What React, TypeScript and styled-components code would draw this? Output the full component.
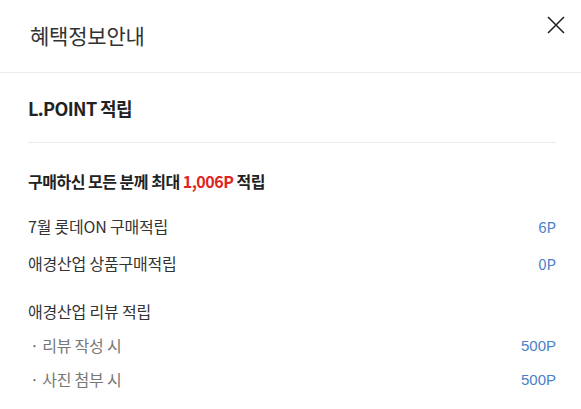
import styled, { createGlobalStyle } from 'styled-components';

const GlobalStyle = createGlobalStyle`
  html, body {
    margin: 0;
    padding: 0;
    background: #fff;
  }
  body {
    font-family: "Noto Sans CJK KR", "Noto Sans", sans-serif;
    color: #333;
  }
`;

const Popup = styled.div`
  width: 581px;
  height: 409px;
  background: #fff;
  overflow: hidden;
`;

const Header = styled.header`
  height: 73px;
  display: flex;
  align-items: center;
  justify-content: space-between;
  padding: 0 15px 0 30px;
  border-bottom: 1px solid #ebebeb;
  box-sizing: border-box;
`;

const Title = styled.h1`
  margin: 0 0 2px;
  font-size: 21px;
  font-weight: 400;
  color: #333;
  letter-spacing: -0.2px;
`;

const CloseButton = styled.button`
  width: 20px;
  height: 20px;
  padding: 0;
  margin-bottom: 23px;
  border: 0;
  background: none;
  display: flex;
  align-items: center;
  justify-content: center;
  cursor: pointer;
`;

const Body = styled.div`
  padding: 0 25px 0 28px;
`;

const SectionHead = styled.h2`
  margin: 0;
  height: 69px;
  display: flex;
  align-items: center;
  font-size: 18px;
  font-weight: 700;
  color: #222;
  letter-spacing: -0.6px;
  border-bottom: 1px solid #ebebeb;
`;

const Summary = styled.p`
  margin: 27px 0 0;
  font-size: 16px;
  line-height: 22px;
  font-weight: 700;
  color: #222;
  letter-spacing: -0.5px;
`;

const Highlight = styled.em`
  font-style: normal;
  color: #e0251f;
`;

const List = styled.ul<{ $top: number; $gap: number }>`
  list-style: none;
  margin: ${(p) => p.$top}px 0 0;
  padding: 0;
  display: flex;
  flex-direction: column;
  gap: ${(p) => p.$gap}px;
`;

const Row = styled.li<{ $sub?: boolean }>`
  display: flex;
  justify-content: space-between;
  align-items: center;
  height: 22px;
  font-size: 16px;
  color: ${(p) => (p.$sub ? '#777' : '#333')};
  letter-spacing: -0.2px;
`;

const Label = styled.span<{ $sub?: boolean }>`
  padding-left: ${(p) => (p.$sub ? '2px' : '0')};
`;

const Amount = styled.span<{ $latin?: boolean }>`
  color: #4a80c8;
  font-family: ${(p) =>
    p.$latin ? '"Liberation Sans", Arial, sans-serif' : '"Noto Sans CJK KR", sans-serif'};
  font-size: 15px;
  letter-spacing: 0;
`;

function CloseIcon() {
  return (
    <svg width="18" height="18" viewBox="0 0 18 18" fill="none">
      <path d="M1 1 L17 17 M17 1 L1 17" stroke="#222" strokeWidth="1.6" />
    </svg>
  );
}

const purchaseRows = [
  { label: '7월 롯데ON 구매적립', amount: '6P' },
  { label: '애경산업 상품구매적립', amount: '0P' },
];

const reviewRows = [
  { label: '· 리뷰 작성 시', amount: '500P' },
  { label: '· 사진 첨부 시', amount: '500P' },
];

export default function App() {
  return (
    <>
      <GlobalStyle />
      <Popup>
        <Header>
          <Title>혜택정보안내</Title>
          <CloseButton aria-label="닫기">
            <CloseIcon />
          </CloseButton>
        </Header>
        <Body>
          <SectionHead>L.POINT 적립</SectionHead>
          <Summary>
            구매하신 모든 분께 최대 <Highlight>1,006P</Highlight> 적립
          </Summary>
          <List $top={23} $gap={15}>
            {purchaseRows.map((r) => (
              <Row key={r.label}>
                <Label>{r.label}</Label>
                <Amount>{r.amount}</Amount>
              </Row>
            ))}
          </List>
          <List $top={26} $gap={12}>
            <Row>
              <Label>애경산업 리뷰 적립</Label>
            </Row>
            {reviewRows.map((r) => (
              <Row key={r.label} $sub>
                <Label $sub>{r.label}</Label>
                <Amount $latin>{r.amount}</Amount>
              </Row>
            ))}
          </List>
        </Body>
      </Popup>
    </>
  );
}
